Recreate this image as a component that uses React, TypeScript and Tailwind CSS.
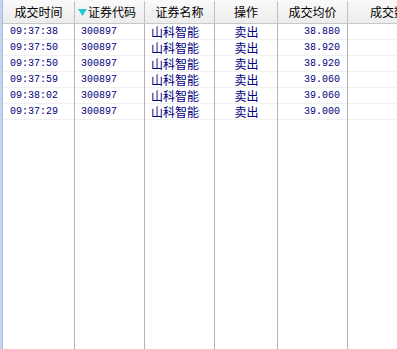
import React from "react";

const rows = [
  { time: "09:37:38", code: "300897", name: "山科智能", op: "卖出", price: "38.880" },
  { time: "09:37:50", code: "300897", name: "山科智能", op: "卖出", price: "38.920" },
  { time: "09:37:50", code: "300897", name: "山科智能", op: "卖出", price: "38.920" },
  { time: "09:37:59", code: "300897", name: "山科智能", op: "卖出", price: "39.060" },
  { time: "09:38:02", code: "300897", name: "山科智能", op: "卖出", price: "39.060" },
  { time: "09:37:29", code: "300897", name: "山科智能", op: "卖出", price: "39.000" },
];

const cjk = "font-['Noto_Sans_CJK_SC',sans-serif]";
const mono = "font-['Liberation_Mono',monospace]";

const App = () => {
  return (
    <div className="w-[397px] h-[349px] overflow-hidden bg-white flex">
      <div className="w-[3px] shrink-0 bg-[#c6d5ef] border-r border-[#a9bde0]" />
      <div className="flex-1 flex flex-col min-w-0">
        {/* header */}
        <div className={`h-[24px] shrink-0 flex bg-gradient-to-b from-[#fafafa] to-[#ececec] border-b border-[#c8c8c8] text-[12px] text-black leading-none pt-[1px] ${cjk}`}>
          <div className="w-[72px] shrink-0 flex items-center justify-center border-r border-[#c0c0c0]">成交时间</div>
          <div className="w-[70px] shrink-0 flex items-center pl-[3px] border-r border-[#c0c0c0]">
            <svg width="9" height="7" viewBox="0 0 9 7" className="mr-[1px]">
              <polygon points="0,0 9,0 4.5,7" fill="#1fc8d8" />
            </svg>
            证券代码
          </div>
          <div className="w-[70px] shrink-0 flex items-center justify-center border-r border-[#c0c0c0]">证券名称</div>
          <div className="w-[63px] shrink-0 flex items-center justify-center border-r border-[#c0c0c0]">操作</div>
          <div className="w-[70px] shrink-0 flex items-center justify-center border-r border-[#c0c0c0]">成交均价</div>
          <div className="w-[92px] shrink-0 flex items-center justify-center">成交数量</div>
        </div>
        {/* body */}
        <div className="flex-1 relative">
          <div className="absolute inset-0 flex pointer-events-none">
            <div className="w-[72px] shrink-0 border-r border-[#b4b4b4]" />
            <div className="w-[70px] shrink-0 border-r border-[#b4b4b4]" />
            <div className="w-[70px] shrink-0 border-r border-[#b4b4b4]" />
            <div className="w-[63px] shrink-0 border-r border-[#b4b4b4]" />
            <div className="w-[70px] shrink-0 border-r border-[#b4b4b4]" />
          </div>
          {rows.map((r, i) => (
            <div key={i} className="h-[16px] flex border-b border-[#f0f0f0] text-[#000080] leading-none pt-[1px]">
              <div className={`w-[72px] shrink-0 flex items-center pl-[7px] text-[10px] ${mono}`}>{r.time}</div>
              <div className={`w-[70px] shrink-0 flex items-center pl-[6px] text-[10px] ${mono}`}>{r.code}</div>
              <div className={`w-[70px] shrink-0 flex items-center pl-[6px] text-[12px] ${cjk}`}>{r.name}</div>
              <div className={`w-[63px] shrink-0 flex items-center justify-center text-[12px] ${cjk}`}>{r.op}</div>
              <div className={`w-[70px] shrink-0 flex items-center justify-end pr-[8px] text-[10px] ${mono}`}>{r.price}</div>
              <div className="w-[92px] shrink-0" />
            </div>
          ))}
        </div>
      </div>
    </div>
  );
};

export default App;
